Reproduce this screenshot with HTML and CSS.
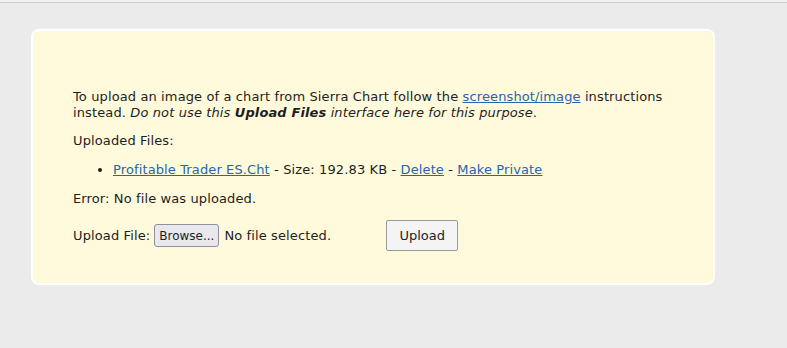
FILE: index.html
```html
<!DOCTYPE html>
<html lang="en">
<head>
    <meta charset="UTF-8">
    <meta name="viewport" content="width=device-width, initial-scale=1.0">
    <title>Upload Files</title>
    <link rel="stylesheet" href="styles.css">
</head>
<body>
    <div class="topbar"></div>
    <div class="card">
        <p class="intro">To upload an image of a chart from Sierra Chart follow the <a href="#">screenshot/image</a> instructions instead. <em>Do not use this <b>Upload Files</b> interface here for this purpose</em>.</p>

        <p>Uploaded Files:</p>
        <ul class="files">
            <li><a href="#">Profitable Trader ES.Cht</a> - Size: 192.83 KB - <a href="#">Delete</a> - <a href="#">Make Private</a></li>
        </ul>

        <p>Error: No file was uploaded.</p>

        <!-- upload form -->
        <form class="upload-row" action="#" method="post">
            <span>Upload File:</span>
            <button type="button" class="browse">Browse...</button>
            <span>No file selected.</span>
            <input type="submit" class="upload-btn" value="Upload">
        </form>
    </div>
</body>
</html>
```

FILE: styles.css
```css
body {
    margin: 0;
    background-color: #ebebeb;
    font-family: "DejaVu Sans", Verdana, sans-serif;
    font-size: 13px;
    line-height: 16px;
    letter-spacing: 0.12px;
    color: #1e1e1e;
}
.topbar {
    height: 2px;
    border-bottom: 1px solid #cdcdcd;
    background-color: #f2f2f2;
}
.card {
    margin: 26px 0 0 31px;
    width: 600px;
    height: 194px;
    padding: 58px 40px 0 40px;
    background-color: #fffadc;
    border: 2px solid #fff;
    border-radius: 8px;
}
p {
    margin: 0 0 13px 0;
}
.intro {
    margin-bottom: 12px;
}
a {
    color: #2b63aa;
}
.files {
    margin: 0 0 13px 0;
    padding-left: 40px;
}
.upload-row {
    display: flex;
    align-items: center;
    margin-top: 12px;
}
.browse {
    font-family: "DejaVu Sans", Verdana, sans-serif;
    font-size: 12px;
    height: 23px;
    margin: 0 5px 0 4px;
    padding: 0 4px;
    background-color: #e9e9ed;
    border: 1px solid #8f8f9d;
    border-radius: 3px;
    color: #1e1e1e;
}
.upload-btn {
    font-family: "DejaVu Sans", Verdana, sans-serif;
    font-size: 13px;
    width: 72px;
    height: 31px;
    margin-left: 55px;
    background-color: #f4f4f4;
    border: 1px solid #9a9a9a;
    border-radius: 2px;
    color: #1e1e1e;
}
```
